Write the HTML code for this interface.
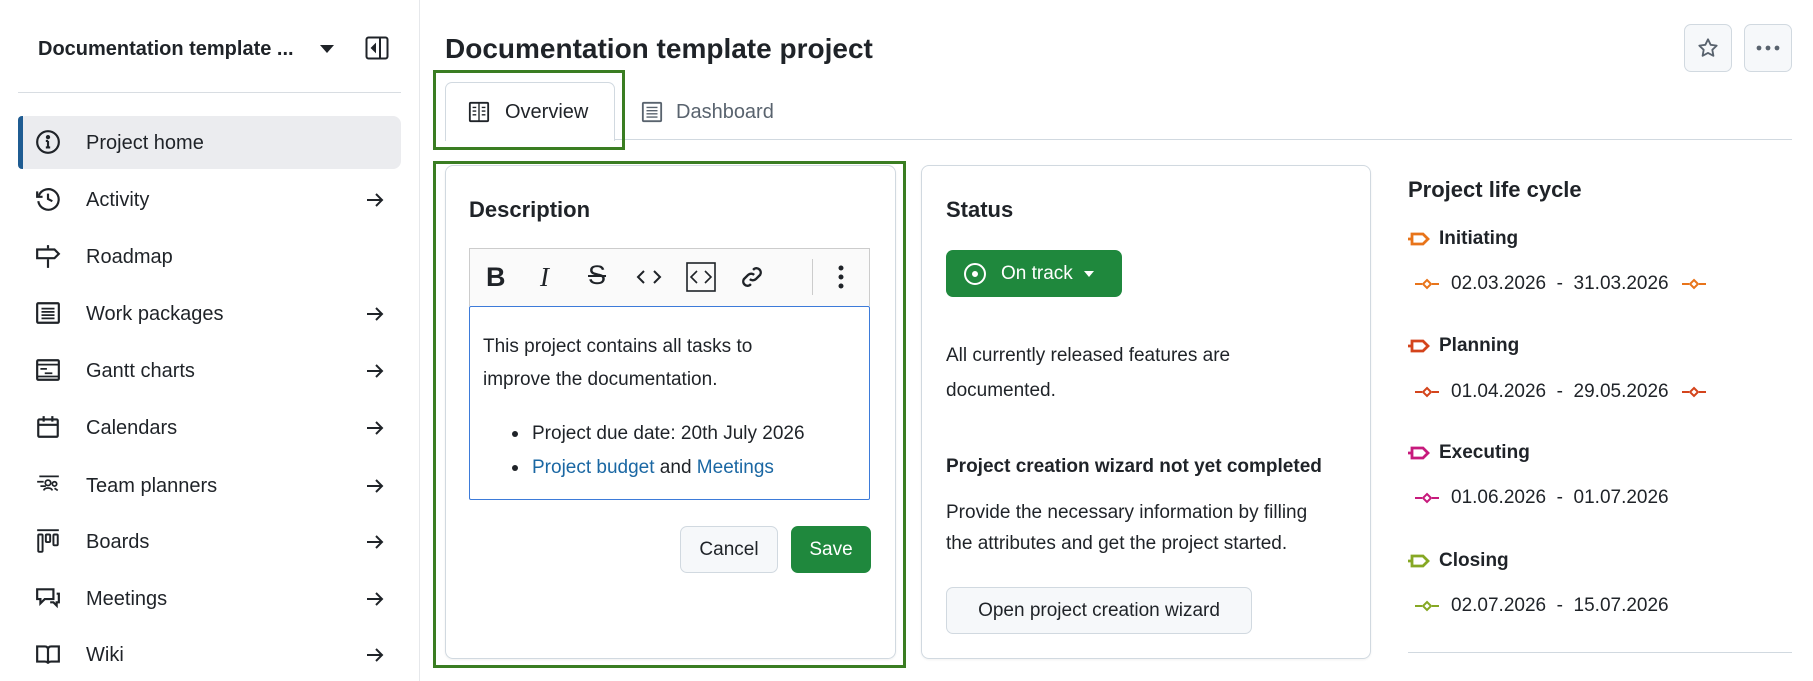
<!DOCTYPE html>
<html><head><meta charset="utf-8"><style>
*{box-sizing:border-box;margin:0;padding:0}
body{width:1813px;height:681px;overflow:hidden;background:#fff;font-family:"Liberation Sans",sans-serif;color:#1f2328;position:relative}
.a{position:absolute}
.nav{position:absolute;left:18px;width:383px;height:53px;display:flex;align-items:center;font-size:20px}
.nav svg.i{position:absolute;left:17px;top:13px;width:26px;height:26px}
.nav span{position:absolute;left:68px;top:16px}
.nav .ar{position:absolute;left:347px;width:20px;height:20px}
.btn{position:absolute;border:1px solid #d1d9e0;border-radius:7px;background:#f6f8fa;display:flex;align-items:center;justify-content:center;font-size:19px;color:#1f2328}
.lc{position:absolute;left:1408px;font-size:19px;font-weight:bold;display:flex;align-items:center}
.dt{position:absolute;left:1415px;font-size:19px;display:flex;align-items:center}
</style></head><body>
<!-- sidebar -->
<div class="a" style="left:419px;top:0;width:1px;height:681px;background:#e6e8eb"></div>
<div class="a" style="left:38px;top:38px;font-size:20px;font-weight:bold">Documentation template ...</div>
<svg class="a" style="left:319px;top:44px" width="16" height="10"><path d="M1 1h14l-7 8z" fill="#1f2328"/></svg>
<svg class="a" style="left:365px;top:36px" width="24" height="24" fill="none" stroke="#1f2328" stroke-width="2"><rect x="1.5" y="1.5" width="21" height="21" rx="2"/><path d="M15 2v20"/><path d="M10 9l-3 3 3 3z" fill="#1f2328"/></svg>
<div class="a" style="left:18px;top:92px;width:383px;height:1px;background:#d8dde2"></div>
<div class="a" style="left:18px;top:116px;width:383px;height:53px;background:#ebecef;border-radius:8px"></div>
<div class="a" style="left:18px;top:116px;width:5px;height:53px;background:#1f5c92;border-radius:4px 0 0 4px"></div>

<div class="nav" style="top:116px"><svg class="i" viewBox="0 0 24 24" fill="none" stroke="#1f2328" stroke-width="2"><circle cx="12" cy="12" r="10"/><path d="M12 11v6M10 17h4M10 11h2"/><circle cx="12" cy="7.5" r="1" fill="#1f2328"/></svg><span>Project home</span></div>
<div class="nav" style="top:173px"><svg class="i" viewBox="0 0 24 24" fill="none" stroke="#1f2328" stroke-width="2"><path d="M3.5 9A9.5 9.5 0 1 1 3 14"/><path d="M2 5v5h5"/><path d="M12 7v5l4 2"/></svg><span>Activity</span><svg class="ar" viewBox="0 0 20 20" fill="none" stroke="#1f2328" stroke-width="2"><path d="M2 10h15M11 4l6 6-6 6"/></svg></div>
<div class="nav" style="top:230px"><svg class="i" viewBox="0 0 24 24" fill="none" stroke="#1f2328" stroke-width="2"><path d="M12 2v3M12 15v8"/><path d="M2 6h16l4 4-4 4H2z"/></svg><span>Roadmap</span></div>
<div class="nav" style="top:287px"><svg class="i" viewBox="0 0 24 24" fill="none" stroke="#1f2328" stroke-width="2"><rect x="2" y="3" width="20" height="18" rx="1"/><path d="M6 8h12M6 11h12M6 14h12M6 17h12" stroke-width="1.6"/></svg><span>Work packages</span><svg class="ar" viewBox="0 0 20 20" fill="none" stroke="#1f2328" stroke-width="2"><path d="M2 10h15M11 4l6 6-6 6"/></svg></div>
<div class="nav" style="top:344px"><svg class="i" viewBox="0 0 24 24" fill="none" stroke="#1f2328" stroke-width="2"><rect x="2" y="3" width="20" height="18" rx="1"/><path d="M2 7h20M5 11h6M9 15h7M2 18h20" stroke-width="1.6"/></svg><span>Gantt charts</span><svg class="ar" viewBox="0 0 20 20" fill="none" stroke="#1f2328" stroke-width="2"><path d="M2 10h15M11 4l6 6-6 6"/></svg></div>
<div class="nav" style="top:401px"><svg class="i" viewBox="0 0 24 24" fill="none" stroke="#1f2328" stroke-width="2"><rect x="3" y="5" width="18" height="16" rx="1"/><path d="M3 10h18M8 2v5M16 2v5"/></svg><span>Calendars</span><svg class="ar" viewBox="0 0 20 20" fill="none" stroke="#1f2328" stroke-width="2"><path d="M2 10h15M11 4l6 6-6 6"/></svg></div>
<div class="nav" style="top:459px"><svg class="i" viewBox="0 0 24 24" fill="none" stroke="#1f2328" stroke-width="1.6"><path d="M4 4h18M2 9h6M5 13h5"/><circle cx="12" cy="10" r="2.5"/><path d="M8 17c1-3 7-3 8 0"/><circle cx="18" cy="11" r="2"/><path d="M18 15l3 2"/></svg><span>Team planners</span><svg class="ar" viewBox="0 0 20 20" fill="none" stroke="#1f2328" stroke-width="2"><path d="M2 10h15M11 4l6 6-6 6"/></svg></div>
<div class="nav" style="top:515px"><svg class="i" viewBox="0 0 24 24" fill="none" stroke="#1f2328" stroke-width="1.8"><path d="M2 2h20"/><rect x="3" y="6" width="4" height="16" rx="1"/><rect x="10" y="6" width="4" height="7" rx="1"/><rect x="17" y="6" width="4" height="10" rx="1"/></svg><span>Boards</span><svg class="ar" viewBox="0 0 20 20" fill="none" stroke="#1f2328" stroke-width="2"><path d="M2 10h15M11 4l6 6-6 6"/></svg></div>
<div class="nav" style="top:572px"><svg class="i" viewBox="0 0 24 24" fill="none" stroke="#1f2328" stroke-width="2"><path d="M2 4h15v9H9l-4 4v-4H2z"/><path d="M20 8h2v8h-2v3l-3-3h-3"/></svg><span>Meetings</span><svg class="ar" viewBox="0 0 20 20" fill="none" stroke="#1f2328" stroke-width="2"><path d="M2 10h15M11 4l6 6-6 6"/></svg></div>
<div class="nav" style="top:628px"><svg class="i" viewBox="0 0 24 24" fill="none" stroke="#1f2328" stroke-width="2"><path d="M2 5h7c2 0 3 1 3 3v13c0-1.5-1-2-3-2H2zM22 5h-7c-2 0-3 1-3 3v13c0-1.5 1-2 3-2h7z"/></svg><span>Wiki</span><svg class="ar" viewBox="0 0 20 20" fill="none" stroke="#1f2328" stroke-width="2"><path d="M2 10h15M11 4l6 6-6 6"/></svg></div>

<!-- header -->
<div class="a" style="left:445px;top:33px;font-size:28px;font-weight:bold">Documentation template project</div>
<div class="btn" style="left:1684px;top:24px;width:48px;height:48px"><svg width="22" height="22" viewBox="0 0 24 24" fill="none" stroke="#59636e" stroke-width="2" stroke-linejoin="round"><path d="M12 2.5l2.9 6 6.6.9-4.8 4.6 1.2 6.5L12 17.4l-5.9 3.1 1.2-6.5L2.5 9.4l6.6-.9z"/></svg></div>
<div class="btn" style="left:1744px;top:24px;width:48px;height:48px"><svg width="24" height="6"><circle cx="3" cy="3" r="2.4" fill="#59636e"/><circle cx="12" cy="3" r="2.4" fill="#59636e"/><circle cx="21" cy="3" r="2.4" fill="#59636e"/></svg></div>

<!-- tabs -->
<div class="a" style="left:445px;top:139px;width:1347px;height:1px;background:#d1d9e0"></div>
<div class="a" style="left:445px;top:82px;width:170px;height:59px;border:1px solid #d1d9e0;border-bottom:none;border-radius:7px 7px 0 0;background:#fff"></div>
<div class="a" style="left:433px;top:70px;width:192px;height:80px;border:3px solid #3a7d22"></div>
<svg class="a" style="left:468px;top:101px" width="22" height="22" viewBox="0 0 24 24" fill="none" stroke="#1f2328" stroke-width="2"><rect x="2" y="2" width="20" height="20" rx="1"/><path d="M12 2v20M5 7h4M5 11h4M5 15h4M15 7h4M15 11h4M15 15h4" stroke-width="1.5"/></svg>
<div class="a" style="left:505px;top:101px;font-size:20px">Overview</div>
<svg class="a" style="left:641px;top:101px" width="22" height="22" viewBox="0 0 24 24" fill="none" stroke="#59636e" stroke-width="2"><rect x="2" y="2" width="20" height="20" rx="1"/><path d="M6 7h12M6 10.5h12M6 14h12M6 17.5h12" stroke-width="1.5"/></svg>
<div class="a" style="left:676px;top:101px;font-size:20px;color:#59636e">Dashboard</div>

<!-- description card -->
<div class="a" style="left:445px;top:165px;width:451px;height:494px;border:1px solid #d1d9e0;border-radius:8px;box-shadow:0 1px 2px rgba(0,0,0,.06)"></div>
<div class="a" style="left:433px;top:161px;width:473px;height:507px;border:3px solid #3a7d22"></div>
<div class="a" style="left:469px;top:197px;font-size:22px;font-weight:bold">Description</div>
<div class="a" style="left:469px;top:248px;width:401px;height:58px;border:1px solid #ccc;border-bottom:none;background:#fafafa"></div>
<div class="a" style="left:469px;top:306px;width:401px;height:194px;border:1px solid #3d7bd9;border-radius:2px"></div>
<div class="a" style="left:486px;top:262px;font-size:27px;font-weight:bold;font-family:'Liberation Sans'">B</div>
<div class="a" style="left:540px;top:262px;font-size:27px;font-style:italic;font-family:'Liberation Serif'">I</div>
<div class="a" style="left:588px;top:260px;font-size:27px;text-decoration:line-through">S</div>
<svg class="a" style="left:636px;top:267px" width="26" height="20" fill="none" stroke="#1f2328" stroke-width="2"><path d="M8 4l-6 6 6 6M18 4l6 6-6 6"/></svg>
<svg class="a" style="left:686px;top:262px" width="30" height="30" fill="none" stroke="#1f2328" stroke-width="1.6"><rect x="1" y="1" width="28" height="28"/><path d="M11 9l-6 6 6 6M19 9l6 6-6 6"/></svg>
<svg class="a" style="left:739px;top:264px" width="26" height="26" viewBox="0 0 24 24" fill="none" stroke="#1f2328" stroke-width="2.2"><path d="M10 14a4 4 0 0 0 5.5 0l4-4a4 4 0 0 0-5.5-5.5l-1 1"/><path d="M14 10a4 4 0 0 0-5.5 0l-4 4a4 4 0 0 0 5.5 5.5l1-1"/></svg>
<div class="a" style="left:812px;top:259px;width:1px;height:36px;background:#ccc"></div>
<svg class="a" style="left:837px;top:264px" width="8" height="26"><circle cx="4" cy="4" r="2.5" fill="#1f2328"/><circle cx="4" cy="13" r="2.5" fill="#1f2328"/><circle cx="4" cy="22" r="2.5" fill="#1f2328"/></svg>
<div class="a" style="left:483px;top:330px;font-size:19px;line-height:33px">This project contains all tasks to<br>improve the documentation.</div>
<div class="a" style="left:532px;top:417px;font-size:19px;line-height:34px">Project due date: 20th July 2026<br><span style="color:#1a67a3">Project budget</span> and <span style="color:#1a67a3">Meetings</span></div>
<div class="a" style="left:512px;top:431px;width:6px;height:6px;border-radius:3px;background:#1f2328"></div>
<div class="a" style="left:512px;top:465px;width:6px;height:6px;border-radius:3px;background:#1f2328"></div>
<div class="btn" style="left:680px;top:526px;width:98px;height:47px">Cancel</div>
<div class="btn" style="left:791px;top:526px;width:80px;height:47px;background:#1f883d;border-color:#1f883d;color:#fff">Save</div>

<!-- status card -->
<div class="a" style="left:921px;top:165px;width:450px;height:494px;border:1px solid #d1d9e0;border-radius:8px;box-shadow:0 1px 2px rgba(0,0,0,.06)"></div>
<div class="a" style="left:946px;top:197px;font-size:22px;font-weight:bold">Status</div>
<div class="a" style="left:946px;top:250px;width:176px;height:47px;background:#1f883d;border-radius:7px;color:#fff;font-size:19px;display:flex;align-items:center">
<svg style="margin-left:17px" width="24" height="24" viewBox="0 0 24 24" fill="none" stroke="#fff" stroke-width="2"><circle cx="12" cy="12" r="10"/><circle cx="12" cy="12" r="2" fill="#fff"/></svg>
<span style="margin-left:14px">On track</span>
<svg style="margin-left:10px" width="12" height="8"><path d="M1 1h10L6 7z" fill="#fff"/></svg></div>
<div class="a" style="left:946px;top:338px;font-size:19px;line-height:35px">All currently released features are<br>documented.</div>
<div class="a" style="left:946px;top:456px;font-size:19px;font-weight:bold">Project creation wizard not yet completed</div>
<div class="a" style="left:946px;top:497px;font-size:19px;line-height:31px">Provide the necessary information by filling<br>the attributes and get the project started.</div>
<div class="btn" style="left:946px;top:587px;width:306px;height:47px">Open project creation wizard</div>

<!-- life cycle -->
<div class="a" style="left:1408px;top:177px;font-size:22px;font-weight:bold">Project life cycle</div>

<div class="lc" style="top:228px"><svg width="24" height="14" fill="none" stroke="#e8741a" stroke-width="2.8"><path d="M0 7h4M4 2h11l5 5-5 5H4z"/></svg><span style="margin-left:7px">Initiating</span></div>
<div class="dt" style="top:273px"><svg width="24" height="14" fill="none" stroke="#e8741a" stroke-width="2"><path d="M0 7h7M17 7h7M12 3l4 4-4 4-4-4z"/></svg><span style="margin-left:12px">02.03.2026&nbsp;&nbsp;-&nbsp;&nbsp;31.03.2026</span><svg style="margin-left:13px" width="24" height="14" fill="none" stroke="#e8741a" stroke-width="2"><path d="M0 7h7M17 7h7M12 3l4 4-4 4-4-4z"/></svg></div>

<div class="lc" style="top:335px"><svg width="24" height="14" fill="none" stroke="#d4441c" stroke-width="2.8"><path d="M0 7h4M4 2h11l5 5-5 5H4z"/></svg><span style="margin-left:7px">Planning</span></div>
<div class="dt" style="top:381px"><svg width="24" height="14" fill="none" stroke="#d4441c" stroke-width="2"><path d="M0 7h7M17 7h7M12 3l4 4-4 4-4-4z"/></svg><span style="margin-left:12px">01.04.2026&nbsp;&nbsp;-&nbsp;&nbsp;29.05.2026</span><svg style="margin-left:13px" width="24" height="14" fill="none" stroke="#d4441c" stroke-width="2"><path d="M0 7h7M17 7h7M12 3l4 4-4 4-4-4z"/></svg></div>

<div class="lc" style="top:442px"><svg width="24" height="14" fill="none" stroke="#c71a7c" stroke-width="2.8"><path d="M0 7h4M4 2h11l5 5-5 5H4z"/></svg><span style="margin-left:7px">Executing</span></div>
<div class="dt" style="top:487px"><svg width="24" height="14" fill="none" stroke="#c71a7c" stroke-width="2"><path d="M0 7h7M17 7h7M12 3l4 4-4 4-4-4z"/></svg><span style="margin-left:12px">01.06.2026&nbsp;&nbsp;-&nbsp;&nbsp;01.07.2026</span></div>

<div class="lc" style="top:550px"><svg width="24" height="14" fill="none" stroke="#86a824" stroke-width="2.8"><path d="M0 7h4M4 2h11l5 5-5 5H4z"/></svg><span style="margin-left:7px">Closing</span></div>
<div class="dt" style="top:595px"><svg width="24" height="14" fill="none" stroke="#86a824" stroke-width="2"><path d="M0 7h7M17 7h7M12 3l4 4-4 4-4-4z"/></svg><span style="margin-left:12px">02.07.2026&nbsp;&nbsp;-&nbsp;&nbsp;15.07.2026</span></div>

<div class="a" style="left:1408px;top:652px;width:384px;height:1px;background:#d1d9e0"></div>
</body></html>
